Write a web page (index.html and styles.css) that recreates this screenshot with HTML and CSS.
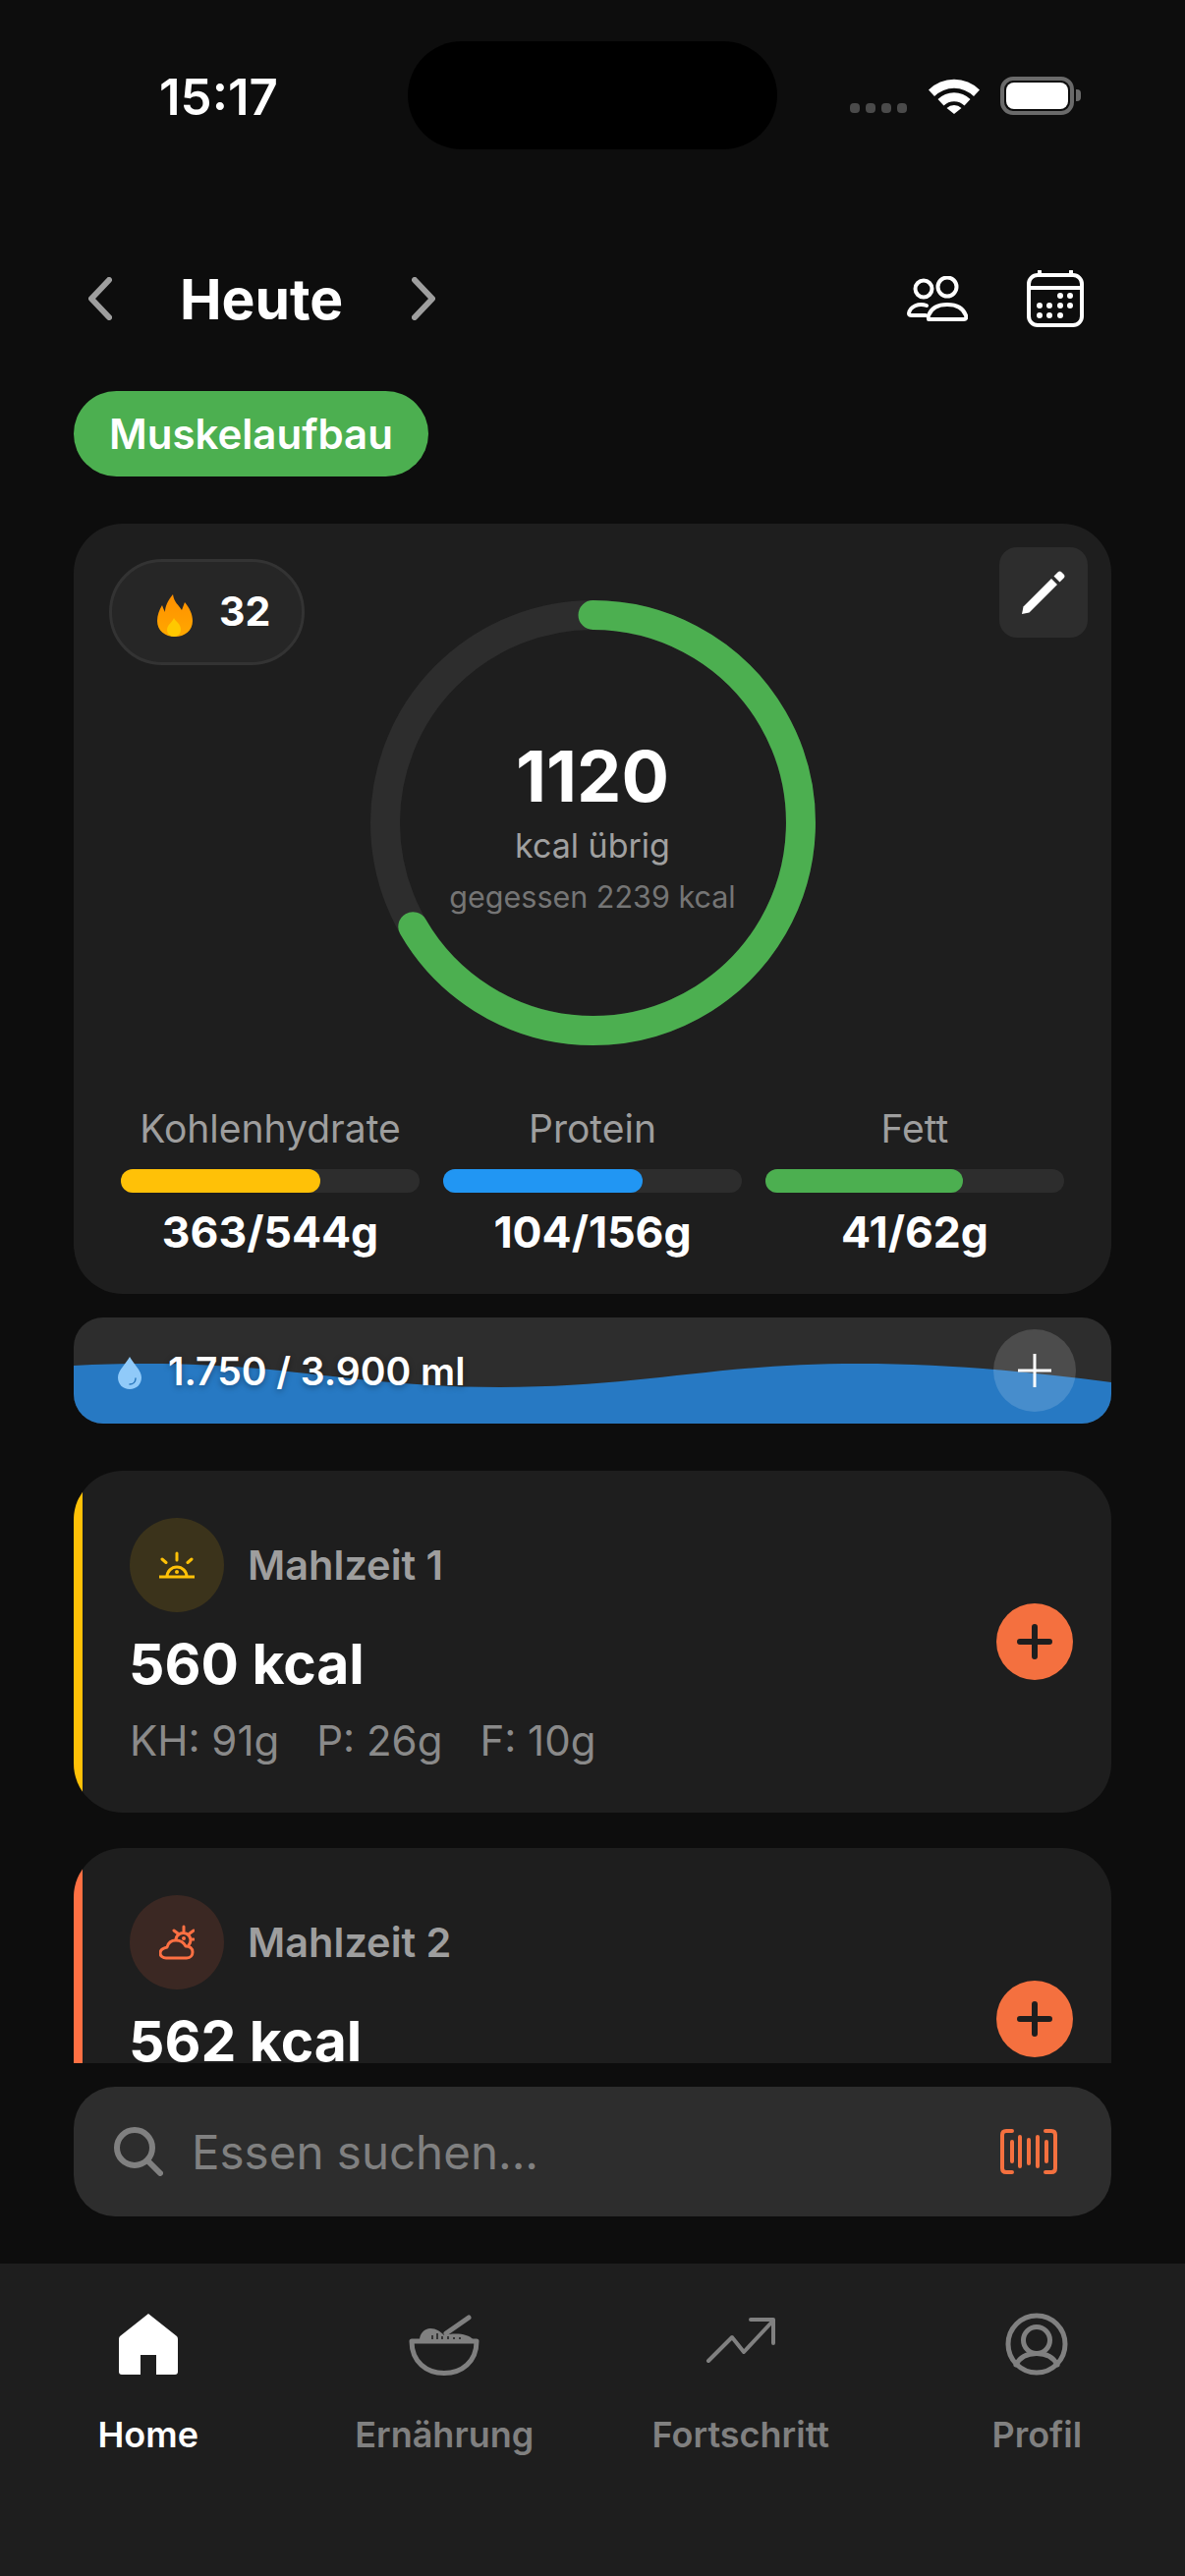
FILE: index.html
```html
<!DOCTYPE html>
<html lang="de">
<head>
<meta charset="UTF-8">
<meta name="viewport" content="width=device-width, initial-scale=1.0">
<title>Heute</title>
<link rel="stylesheet" href="styles.css">
</head>
<body>

<div class="status-bar">
    <div class="time">15:17</div>
    <div class="island"></div>
    <div class="status-icons">
        <div class="signal"><span></span><span></span><span></span><span></span></div>
        <svg class="wifi" viewBox="0 0 52 38">
            <path d="M0 13.500 A37 37 0 0 1 52 13.500 L46 20 A28.500 28.500 0 0 0 6 20 Z" fill="#fff"/>
            <path d="M9.500 23 A23.500 23.500 0 0 1 42.500 23 L36.500 29.500 A15 15 0 0 0 15.500 29.500 Z" fill="#fff"/>
            <path d="M18.500 32 A11 11 0 0 1 33.500 32 L26 38 Z" fill="#fff"/>
        </svg>
        <div class="battery"><div class="battery-fill"></div></div>
        <div class="battery-tip"></div>
    </div>
</div>

<div class="top-nav">
    <svg class="chevron" viewBox="0 0 24 44"><path d="M21 3 L3 22 L21 41"/></svg>
    <h1 class="day-title">Heute</h1>
    <svg class="chevron" viewBox="0 0 24 44"><path d="M3 3 L21 22 L3 41"/></svg>
    <div class="top-actions">
        <svg class="people-icon" viewBox="0 0 62 46">
            <circle cx="17" cy="13" r="8.500"/>
            <circle cx="41" cy="11" r="9.500"/>
            <path d="M20 30 C12 27 3 31 2 38 Q2 40 5 40 H19"/>
            <path d="M22 44 H58 Q61 44 60 40 C57 32 50 29 41 29 C32 29 25 32 22 40 Q21 44 24 44 Z"/>
        </svg>
        <svg class="calendar-icon" viewBox="0 0 58 58">
            <rect x="2" y="5" width="54" height="51" rx="9"/>
            <path d="M2 18 H56 M13 1 V5 M45 1 V5"/>
            <g class="calendar-dots">
                <circle cx="34" cy="26" r="3"/><circle cx="44" cy="26" r="3"/>
                <circle cx="13" cy="36" r="3"/><circle cx="23" cy="36" r="3"/><circle cx="34" cy="36" r="3"/><circle cx="44" cy="36" r="3"/>
                <circle cx="13" cy="46" r="3"/><circle cx="23" cy="46" r="3"/><circle cx="34" cy="46" r="3"/>
            </g>
        </svg>
    </div>
</div>

<div class="goal-pill">Muskelaufbau</div>

<div class="summary-card">
    <div class="streak">
        <svg class="flame" viewBox="0 0 36 43">
            <defs>
                <linearGradient id="flameOuter" x1="0" y1="0" x2="0" y2="1">
                    <stop offset="0" stop-color="#ff8f00"/>
                    <stop offset="1" stop-color="#ffa800"/>
                </linearGradient>
            </defs>
            <path d="M16 0 C17 8 22 11 25 16 C26 13 27 11 28 8 C33 14 36 20 36 27 C36 37 28 43 18 43 C8 43 0 37 0 27 C0 21 2 16 5 11 C6 14 7 16 8 18 C8 12 11 6 16 0 Z" fill="url(#flameOuter)"/>
            <path d="M17 24 C19 28 24 30 24 36 C24 40 21 43 17 43 C13 43 10 40 10 36 C10 31 15 29 17 24 Z" fill="#ffc800"/>
        </svg>
        <span class="streak-count">32</span>
    </div>
    <div class="edit-btn">
        <svg class="edit-icon" viewBox="0 0 46 46"><path d="M1 45 L2.500 37.500 L31 9 L37 15 L8.500 43.500 Z"/><path d="M33.500 6.500 L37.500 2.500 Q39.500 .5 41.500 2.500 L43.500 4.500 Q45.500 6.500 43.500 8.500 L39.500 12.500 Z"/></svg>
    </div>

    <div class="ring">
        <svg class="ring-svg" viewBox="0 0 453 453">
            <circle class="ring-track" cx="226.500" cy="226.500" r="211.500"/>
            <path class="ring-progress" d="M226.500 15 A211.500 211.500 0 1 1 43.300 332.250"/>
        </svg>
        <div class="ring-text">
            <div class="kcal-left">1120</div>
            <div class="kcal-label">kcal übrig</div>
            <div class="kcal-eaten">gegessen 2239 kcal</div>
        </div>
    </div>

    <div class="macros">
        <div class="macro">
            <div class="macro-label">Kohlenhydrate</div>
            <div class="macro-bar"><div class="macro-fill fill-carbs" style="width:66.800%"></div></div>
            <div class="macro-value">363/544g</div>
        </div>
        <div class="macro">
            <div class="macro-label">Protein</div>
            <div class="macro-bar"><div class="macro-fill fill-protein" style="width:66.800%"></div></div>
            <div class="macro-value">104/156g</div>
        </div>
        <div class="macro">
            <div class="macro-label">Fett</div>
            <div class="macro-bar"><div class="macro-fill fill-fat" style="width:66.100%"></div></div>
            <div class="macro-value">41/62g</div>
        </div>
    </div>
</div>

<div class="water-card">
    <svg class="wave" viewBox="0 0 1056 108" preserveAspectRatio="none">
        <path d="M0 49 C25 47.500 50 47 75 47 C220 47 290 71 434 71 C580 71 650 47 799 47 C890 47 970 55 1056 66 V108 H0 Z"/>
    </svg>
    <svg class="drop" viewBox="0 0 24 33">
        <path d="M12 0 C15 6 24 14 24 21 C24 28 19 33 12 33 C5 33 0 28 0 21 C0 14 9 6 12 0 Z" fill="#90caf9"/>
        <path d="M18 22 C18 26 15 28 12 28" fill="none" stroke="#2a78bd" stroke-width="1.500" stroke-linecap="round"/>
    </svg>
    <div class="water-text">1.750 / 3.900 ml</div>
    <div class="water-add">
        <svg class="water-plus" viewBox="0 0 34 34"><path d="M17 0 V34 M0 17 H34"/></svg>
    </div>
</div>

<div class="meals">
    <div class="meal-card meal-yellow">
        <div class="meal-info">
            <div class="meal-head">
                <div class="meal-icon icon-yellow">
                    <svg class="meal-svg" viewBox="0 0 36 36">
                        <path d="M0 30 H36 M8 30 A10 10 0 0 1 28 30 M18 6 V13 M3 12 L7 15.500 M33 12 L29 15.500"/>
                        <circle cx="18" cy="25" r="2" fill="currentColor" stroke="none"/>
                    </svg>
                </div>
                <div class="meal-name">Mahlzeit 1</div>
            </div>
            <div class="meal-kcal">560 kcal</div>
            <div class="meal-macros"><span>KH: 91g</span><span>P: 26g</span><span>F: 10g</span></div>
        </div>
        <div class="meal-add">
            <svg class="meal-plus" viewBox="0 0 36 36"><path d="M18 3 V33 M3 18 H33"/></svg>
        </div>
    </div>

    <div class="meal-card meal-orange">
        <div class="meal-info">
            <div class="meal-head">
                <div class="meal-icon icon-orange">
                    <svg class="meal-svg" viewBox="0 0 36 36">
                        <path d="M7 34 H28 C32 34 34 31 34 28 C34 24 31 22 27 22 C25 18 21 16 17 16 C12 16 9 19 8 23 C4 24 1 26 1 29 C1 32 4 34 7 34 Z"/>
                        <path d="M17 15 A7.500 7.500 0 1 1 30 21 M25 2 V7 M15 6 L19 9 M35 6 L31 9 M32 15 H35"/>
                        <circle cx="25" cy="14" r="2" fill="currentColor" stroke="none"/>
                    </svg>
                </div>
                <div class="meal-name">Mahlzeit 2</div>
            </div>
            <div class="meal-kcal">562 kcal</div>
        </div>
        <div class="meal-add">
            <svg class="meal-plus" viewBox="0 0 36 36"><path d="M18 3 V33 M3 18 H33"/></svg>
        </div>
    </div>
</div>

<div class="search-bar">
    <svg class="search-icon" viewBox="0 0 50 50"><circle cx="21" cy="21" r="18"/><path d="M34 34 L47 47"/></svg>
    <div class="search-text">Essen suchen...</div>
    <svg class="barcode-icon" viewBox="0 0 58 46">
        <path class="barcode-frame" d="M12 2 H6 Q2 2 2 6 V40 Q2 44 6 44 H12 M46 2 H52 Q56 2 56 6 V40 Q56 44 52 44 H46"/>
        <path class="barcode-bars" d="M12 13 V33 M20 8 V38 M29 11 V35 M38 8 V38 M47 13 V33"/>
    </svg>
</div>

<div class="tab-bar">
    <div class="tab tab-active">
        <svg class="tab-icon" viewBox="0 0 72 64">
            <path class="tab-fill" d="M36 1 L65 24 Q66 25 66 27 V60 Q66 63 63 63 H44 V43 H28 V63 H9 Q6 63 6 60 V27 Q6 25 7 24 Z"/>
        </svg>
        <div class="tab-label">Home</div>
    </div>
    <div class="tab">
        <svg class="tab-icon" viewBox="0 0 72 64">
            <path class="tab-line" d="M3 29 H69 C69 50 54 61.500 36 61.500 C18 61.500 3 50 3 29 Z"/>
            <path class="tab-fill" d="M11 28 C11 21 16 16 22 16 C28 16 32 19 36 23 C44 21 60 20 66 28 Z"/>
            <path class="tab-line" d="M38 21 L61 5"/>
            <path class="rice-marks" d="M24 27 V23 M29 27 V21 M34 27 V24 M40 27 V24 M46 27 V25 M52 27 V25"/>
        </svg>
        <div class="tab-label">Ernährung</div>
    </div>
    <div class="tab">
        <svg class="tab-icon" viewBox="0 0 72 64">
            <path class="tab-line thin-line" d="M3 49 L27 25 L39 40 L68 9 M46 7 H69 V31"/>
        </svg>
        <div class="tab-label">Fortschritt</div>
    </div>
    <div class="tab">
        <svg class="tab-icon" viewBox="0 0 72 64">
            <circle class="tab-line" cx="36" cy="32" r="29"/>
            <circle class="tab-line" cx="36" cy="28" r="13.500"/>
            <path class="tab-line" d="M15 53 C19 45 27 41.500 36 41.500 C45 41.500 53 45 57 53"/>
        </svg>
        <div class="tab-label">Profil</div>
    </div>
</div>

</body>
</html>
```

FILE: styles.css
```css
body {
    font-family: Inter, "Noto Sans", sans-serif;
    margin: 0;
    width: 1206px;
    height: 2622px;
    overflow: hidden;
    background-color: #0d0d0d;
    color: #fff;
}

/* status bar */
.status-bar {
    display: flex;
    align-items: center;
    height: 110px;
    padding: 42px 106px 0 162px;
}
.time {
    width: 253px;
    padding-top: 2px;
    font-size: 51px;
    font-weight: 600;
}
.island {
    width: 376px;
    height: 110px;
    border-radius: 55px;
    background-color: #000;
}
.status-icons {
    display: flex;
    align-items: center;
    margin-left: auto;
}
.signal {
    display: flex;
    gap: 6px;
    margin-top: 26px;
    margin-right: 22px;
}
.signal span {
    width: 10px;
    height: 10px;
    border-radius: 4px;
    background-color: #4a4a4a;
}
.wifi {
    width: 52px;
    height: 38px;
    margin-right: 21px;
}
.battery {
    box-sizing: border-box;
    width: 75px;
    height: 39px;
    padding: 2px;
    border: 4px solid #6a6a6a;
    border-radius: 13px;
}
.battery-fill {
    height: 100%;
    border-radius: 8px;
    background-color: #fff;
}
.battery-tip {
    width: 5px;
    height: 12px;
    margin-left: 2px;
    border-radius: 0 4px 4px 0;
    background-color: #6a6a6a;
}

/* header row */
.top-nav {
    display: flex;
    align-items: center;
    height: 60px;
    margin-top: 122px;
    padding: 0 103px 0 90px;
}
.chevron {
    width: 24px;
    height: 44px;
}
.chevron path {
    fill: none;
    stroke: #9e9e9e;
    stroke-width: 6;
    stroke-linecap: round;
    stroke-linejoin: round;
}
.day-title {
    margin: 2px 70px 0 69px;
    font-size: 57px;
    font-weight: 700;
    line-height: 60px;
}
.top-actions {
    display: flex;
    align-items: center;
    gap: 60px;
    margin-left: auto;
}
.people-icon {
    width: 62px;
    height: 46px;
}
.calendar-icon {
    width: 58px;
    height: 58px;
}
.people-icon circle, .people-icon path,
.calendar-icon rect, .calendar-icon path {
    fill: none;
    stroke: #fff;
    stroke-width: 4;
    stroke-linecap: round;
    stroke-linejoin: round;
}
.calendar-dots circle {
    fill: #fff;
}

.goal-pill {
    width: fit-content;
    height: 87px;
    margin: 64px 0 0 75px;
    padding: 0 36px;
    border-radius: 44px;
    background-color: #4caf50;
    font-size: 42px;
    font-weight: 600;
    line-height: 87px;
}

/* calorie card */
.summary-card {
    position: relative;
    box-sizing: border-box;
    height: 784px;
    margin: 48px 75px 0;
    padding-top: 78px;
    border-radius: 50px;
    background-color: #1e1e1e;
}
.streak {
    position: absolute;
    top: 36px;
    left: 36px;
    box-sizing: border-box;
    display: flex;
    align-items: center;
    gap: 27px;
    width: 199px;
    height: 108px;
    padding-left: 46px;
    border: 3px solid #333;
    border-radius: 54px;
    background-color: #262626;
}
.flame {
    width: 36px;
    height: 43px;
    margin-top: 6px;
}
.streak-count {
    margin-bottom: 2px;
    font-size: 41px;
    font-weight: 700;
}
.edit-btn {
    position: absolute;
    top: 24px;
    right: 24px;
    display: flex;
    align-items: center;
    justify-content: center;
    width: 90px;
    height: 92px;
    border-radius: 18px;
    background-color: #2d2d2d;
}
.edit-icon {
    width: 46px;
    height: 46px;
    fill: #fff;
}
.ring {
    position: relative;
    width: 453px;
    height: 453px;
    margin: 0 auto;
}
.ring-svg {
    position: absolute;
    top: 0;
    left: 0;
    width: 453px;
    height: 453px;
}
.ring-track, .ring-progress {
    fill: none;
    stroke-width: 30;
}
.ring-track {
    stroke: #2d2d2d;
}
.ring-progress {
    stroke: #4caf50;
    stroke-linecap: round;
}
.ring-text {
    position: relative;
    display: flex;
    flex-direction: column;
    align-items: center;
    padding-top: 136px;
}
.kcal-left {
    font-size: 72px;
    font-weight: 700;
    line-height: 86px;
}
.kcal-label {
    margin-top: 6px;
    font-size: 34px;
    line-height: 44px;
    color: #a0a0a0;
}
.kcal-eaten {
    margin-top: 11px;
    font-size: 30.500px;
    line-height: 38px;
    color: #757575;
}
.macros {
    display: grid;
    grid-template-columns: repeat(3, 304px);
    gap: 24px;
    margin-top: 62px;
    padding: 0 48px;
}
.macro {
    text-align: center;
}
.macro-label {
    font-size: 39px;
    line-height: 46px;
    color: #9e9e9e;
}
.macro-bar {
    height: 24px;
    margin-top: 18px;
    border-radius: 12px;
    background-color: #2d2d2d;
}
.macro-fill {
    height: 100%;
    border-radius: 12px;
}
.fill-carbs { background-color: #ffc107; }
.fill-protein { background-color: #2196f3; }
.fill-fat { background-color: #4caf50; }
.macro-value {
    margin-top: 13px;
    font-size: 44.500px;
    font-weight: 700;
    line-height: 54px;
}

/* water */
.water-card {
    position: relative;
    display: flex;
    align-items: center;
    height: 108px;
    margin: 24px 75px 0;
    padding-left: 45px;
    border-radius: 30px;
    overflow: hidden;
    background-color: #2d2d2d;
}
.wave {
    position: absolute;
    top: 0;
    left: 0;
    width: 100%;
    height: 100%;
}
.wave path {
    fill: #2779c3;
}
.drop {
    position: relative;
    width: 24px;
    height: 33px;
    margin-top: 4px;
}
.water-text {
    position: relative;
    margin-left: 27px;
    font-size: 39px;
    font-weight: 600;
    text-shadow: 0 2px 6px rgba(0, 0, 0, 0.35);
}
.water-add {
    position: absolute;
    top: 12px;
    right: 36px;
    display: flex;
    align-items: center;
    justify-content: center;
    width: 84px;
    height: 84px;
    border-radius: 50%;
    background-color: rgba(255, 255, 255, 0.15);
}
.water-plus {
    width: 34px;
    height: 34px;
}
.water-plus path {
    fill: none;
    stroke: #fff;
    stroke-width: 3;
    stroke-linecap: round;
}

/* meals */
.meals {
    display: flex;
    flex-direction: column;
    gap: 36px;
    height: 603px;
    margin: 0 75px;
    padding-top: 48px;
    overflow: hidden;
}
.meal-card {
    position: relative;
    box-sizing: border-box;
    flex-shrink: 0;
    display: flex;
    align-items: center;
    justify-content: space-between;
    height: 348px;
    padding: 0 39px 0 57px;
    border-radius: 50px;
    overflow: hidden;
    background-color: #1e1e1e;
}
/* colour strip, clipped by the card corners */
.meal-card::before {
    content: "";
    position: absolute;
    top: 0;
    bottom: 0;
    left: 0;
    width: 9px;
}
.meal-yellow::before { background-color: #ffc107; }
.meal-orange::before { background-color: #ff7043; }
.meal-info {
    align-self: flex-start;
    padding-top: 48px;
}
.meal-head {
    display: flex;
    align-items: center;
    gap: 24px;
}
.meal-icon {
    display: flex;
    align-items: center;
    justify-content: center;
    width: 96px;
    height: 96px;
    border-radius: 50%;
}
.icon-yellow {
    background-color: rgba(255, 193, 7, 0.13);
    color: #ffc107;
}
.icon-orange {
    background-color: rgba(255, 112, 67, 0.13);
    color: #ff7043;
}
.meal-svg {
    width: 36px;
    height: 36px;
    fill: none;
    stroke: currentColor;
    stroke-width: 3;
    stroke-linecap: round;
    stroke-linejoin: round;
}
.meal-name {
    font-size: 41.500px;
    font-weight: 600;
    color: #9e9e9e;
}
.meal-kcal {
    margin: 19px 0 0 -1px;
    font-size: 57px;
    font-weight: 700;
    line-height: 68px;
}
.meal-macros {
    display: flex;
    gap: 38px;
    margin-top: 21px;
    font-size: 42px;
    line-height: 46px;
    color: #8a8a8a;
}
.meal-add {
    display: flex;
    align-items: center;
    justify-content: center;
    width: 78px;
    height: 78px;
    border-radius: 50%;
    background-color: #f4703f;
}
.meal-plus {
    width: 36px;
    height: 36px;
}
.meal-plus path {
    fill: none;
    stroke: #1e1e1e;
    stroke-width: 6;
    stroke-linecap: round;
}

/* search */
.search-bar {
    display: flex;
    align-items: center;
    height: 132px;
    margin: 24px 75px 0;
    padding: 0 55px 0 41px;
    border-radius: 42px;
    background-color: #2d2d2d;
}
.search-icon {
    width: 50px;
    height: 50px;
}
.search-icon circle, .search-icon path {
    fill: none;
    stroke: #808080;
    stroke-width: 6;
    stroke-linecap: round;
}
.search-text {
    margin-left: 29px;
    font-size: 47.500px;
    color: #808080;
}
.barcode-icon {
    width: 58px;
    height: 46px;
    margin-left: auto;
    fill: none;
    stroke: #f4703f;
    stroke-width: 4;
    stroke-linecap: round;
    stroke-linejoin: round;
}

/* bottom tabs */
.tab-bar {
    display: flex;
    height: 318px;
    margin-top: 48px;
    background-color: #1e1e1e;
}
.tab {
    flex: 1;
    display: flex;
    flex-direction: column;
    align-items: center;
    padding-top: 50px;
    color: #808080;
}
.tab-active {
    color: #fff;
}
.tab-icon {
    width: 72px;
    height: 64px;
}
.tab-fill {
    fill: currentColor;
}
.tab-line {
    fill: none;
    stroke: currentColor;
    stroke-width: 5;
    stroke-linecap: round;
    stroke-linejoin: round;
}
.thin-line {
    stroke-width: 4;
}
.rice-marks {
    fill: none;
    stroke: #1e1e1e;
    stroke-width: 1.500;
}
.tab-label {
    margin-top: 38px;
    font-size: 36px;
    font-weight: 600;
    line-height: 44px;
}
```
